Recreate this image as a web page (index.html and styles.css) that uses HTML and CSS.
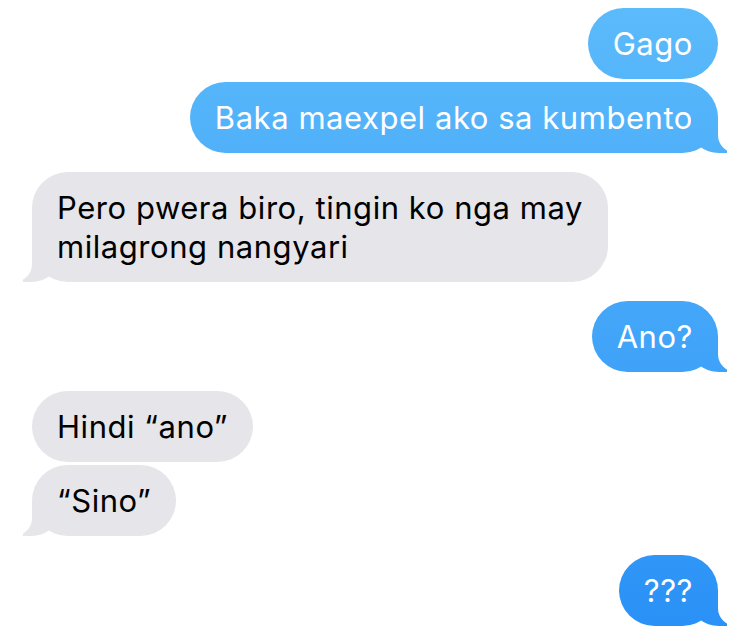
FILE: index.html
```html
<!DOCTYPE html>
<html lang="tl">
<head>
  <meta charset="UTF-8" />
  <meta name="viewport" content="width=device-width, initial-scale=1.0"/>
  <title>Messages</title>
  <link rel="stylesheet" href="styles.css">
</head>
<body>
  <div class="chat">
    <div class="msg sent">Gago</div>
    <div class="msg sent tail">Baka maexpel ako sa kumbento</div>

    <div class="msg recv tail">Pero pwera biro, tingin ko nga may<br>milagrong nangyari</div>

    <div class="msg sent tail">Ano?</div>

    <div class="msg recv">Hindi &ldquo;ano&rdquo;</div>
    <div class="msg recv tail">&ldquo;Sino&rdquo;</div>

    <div class="msg sent tail">???</div>
  </div>
</body>
</html>
```

FILE: styles.css
```css
body {
  margin: 0;
  background: #fff;
  font-family: 'Inter', 'Roboto', sans-serif;
  overflow: hidden;
}

.chat {
  display: flex;
  flex-direction: column;
  padding: 8px 32px;
}

.msg {
  position: relative;
  max-width: 560px;
  padding: 16px 25px;
  font-size: 31px;
  line-height: 39px;
  letter-spacing: 0.55px;
  border-radius: 36px;
  margin-bottom: 3px;
}

.msg.tail {
  margin-bottom: 19px;
}

.sent {
  align-self: flex-end;
  color: #fff;
  background: linear-gradient(to bottom, #5cbbfb, #2990f6) fixed;
}

.recv {
  align-self: flex-start;
  color: #000;
  background: #e5e5ea;
}

/* bubble tails */
.tail::before,
.tail::after {
  content: "";
  position: absolute;
  bottom: 0;
  height: 36px;
}

.sent.tail::before {
  right: -9px;
  width: 36px;
  background: linear-gradient(to bottom, #5cbbfb, #2990f6) fixed;
  border-bottom-left-radius: 28px 24px;
}

.sent.tail::after {
  right: -44px;
  width: 44px;
  background: #fff;
  border-bottom-left-radius: 18px;
}

.recv.tail::before {
  left: -9px;
  width: 36px;
  background: #e5e5ea;
  border-bottom-right-radius: 28px 24px;
}

.recv.tail::after {
  left: -44px;
  width: 44px;
  background: #fff;
  border-bottom-right-radius: 18px;
}
```
